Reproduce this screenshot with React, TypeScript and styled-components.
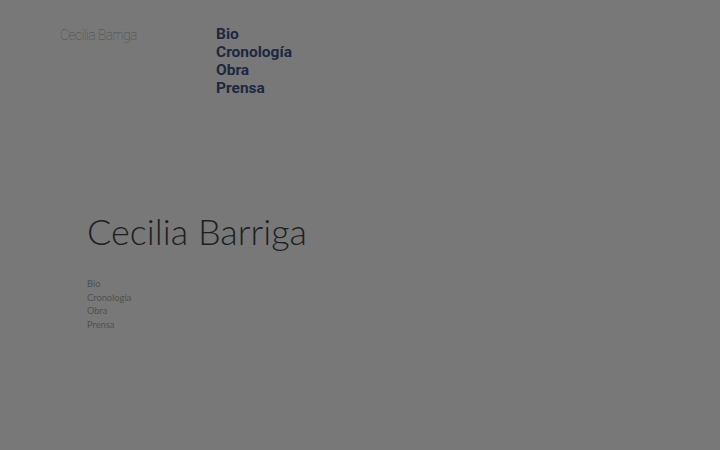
import styled, { createGlobalStyle } from 'styled-components';

const GlobalStyle = createGlobalStyle`
  html, body {
    margin: 0;
    padding: 0;
    background: #787878;
  }
`;

const StyledPage = styled.div`
  position: relative;
  width: 720px;
  height: 450px;
  overflow: hidden;
  background: #787878;
`;

const StyledHeader = styled.header`
  display: flex;
  align-items: flex-start;
  padding: 25px 0 0 60px;
`;

const StyledLogo = styled.div`
  width: 156px;
  padding-top: 2px;
  font-family: 'Roboto', sans-serif;
  font-weight: 100;
  font-size: 14px;
  letter-spacing: -0.6px;
  color: #4e4e4e;
`;

const StyledNav = styled.nav`
  display: flex;
  flex-direction: column;
`;

const StyledNavLink = styled.a`
  font-family: 'Roboto', sans-serif;
  font-weight: 700;
  font-size: 15.5px;
  line-height: 18px;
  color: #1e2740;
  text-decoration: none;
`;

const StyledMenu = styled.div`
  padding: 113px 0 0 87px;
`;

const StyledTitle = styled.h1`
  margin: 0;
  font-family: 'Lato', sans-serif;
  font-weight: 300;
  font-size: 36px;
  line-height: 43px;
  color: #1f1f1f;
`;

const StyledList = styled.ul`
  list-style: none;
  margin: 24px 0 0;
  padding: 0;
`;

const StyledItem = styled.li`
  font-family: 'Lato', sans-serif;
  font-weight: 400;
  font-size: 9.3px;
  line-height: 13.7px;
  color: #505050;
`;

const links = ['Bio', 'Cronología', 'Obra', 'Prensa'];

function App(): JSX.Element {
  return (
    <StyledPage>
      <GlobalStyle />
      <StyledHeader>
        <StyledLogo>Cecilia Barriga</StyledLogo>
        <StyledNav>
          {links.map((l) => (
            <StyledNavLink key={l} href="#">
              {l}
            </StyledNavLink>
          ))}
        </StyledNav>
      </StyledHeader>
      <StyledMenu>
        <StyledTitle>Cecilia Barriga</StyledTitle>
        <StyledList>
          {links.map((l) => (
            <StyledItem key={l}>{l}</StyledItem>
          ))}
        </StyledList>
      </StyledMenu>
    </StyledPage>
  );
}

export default App;
